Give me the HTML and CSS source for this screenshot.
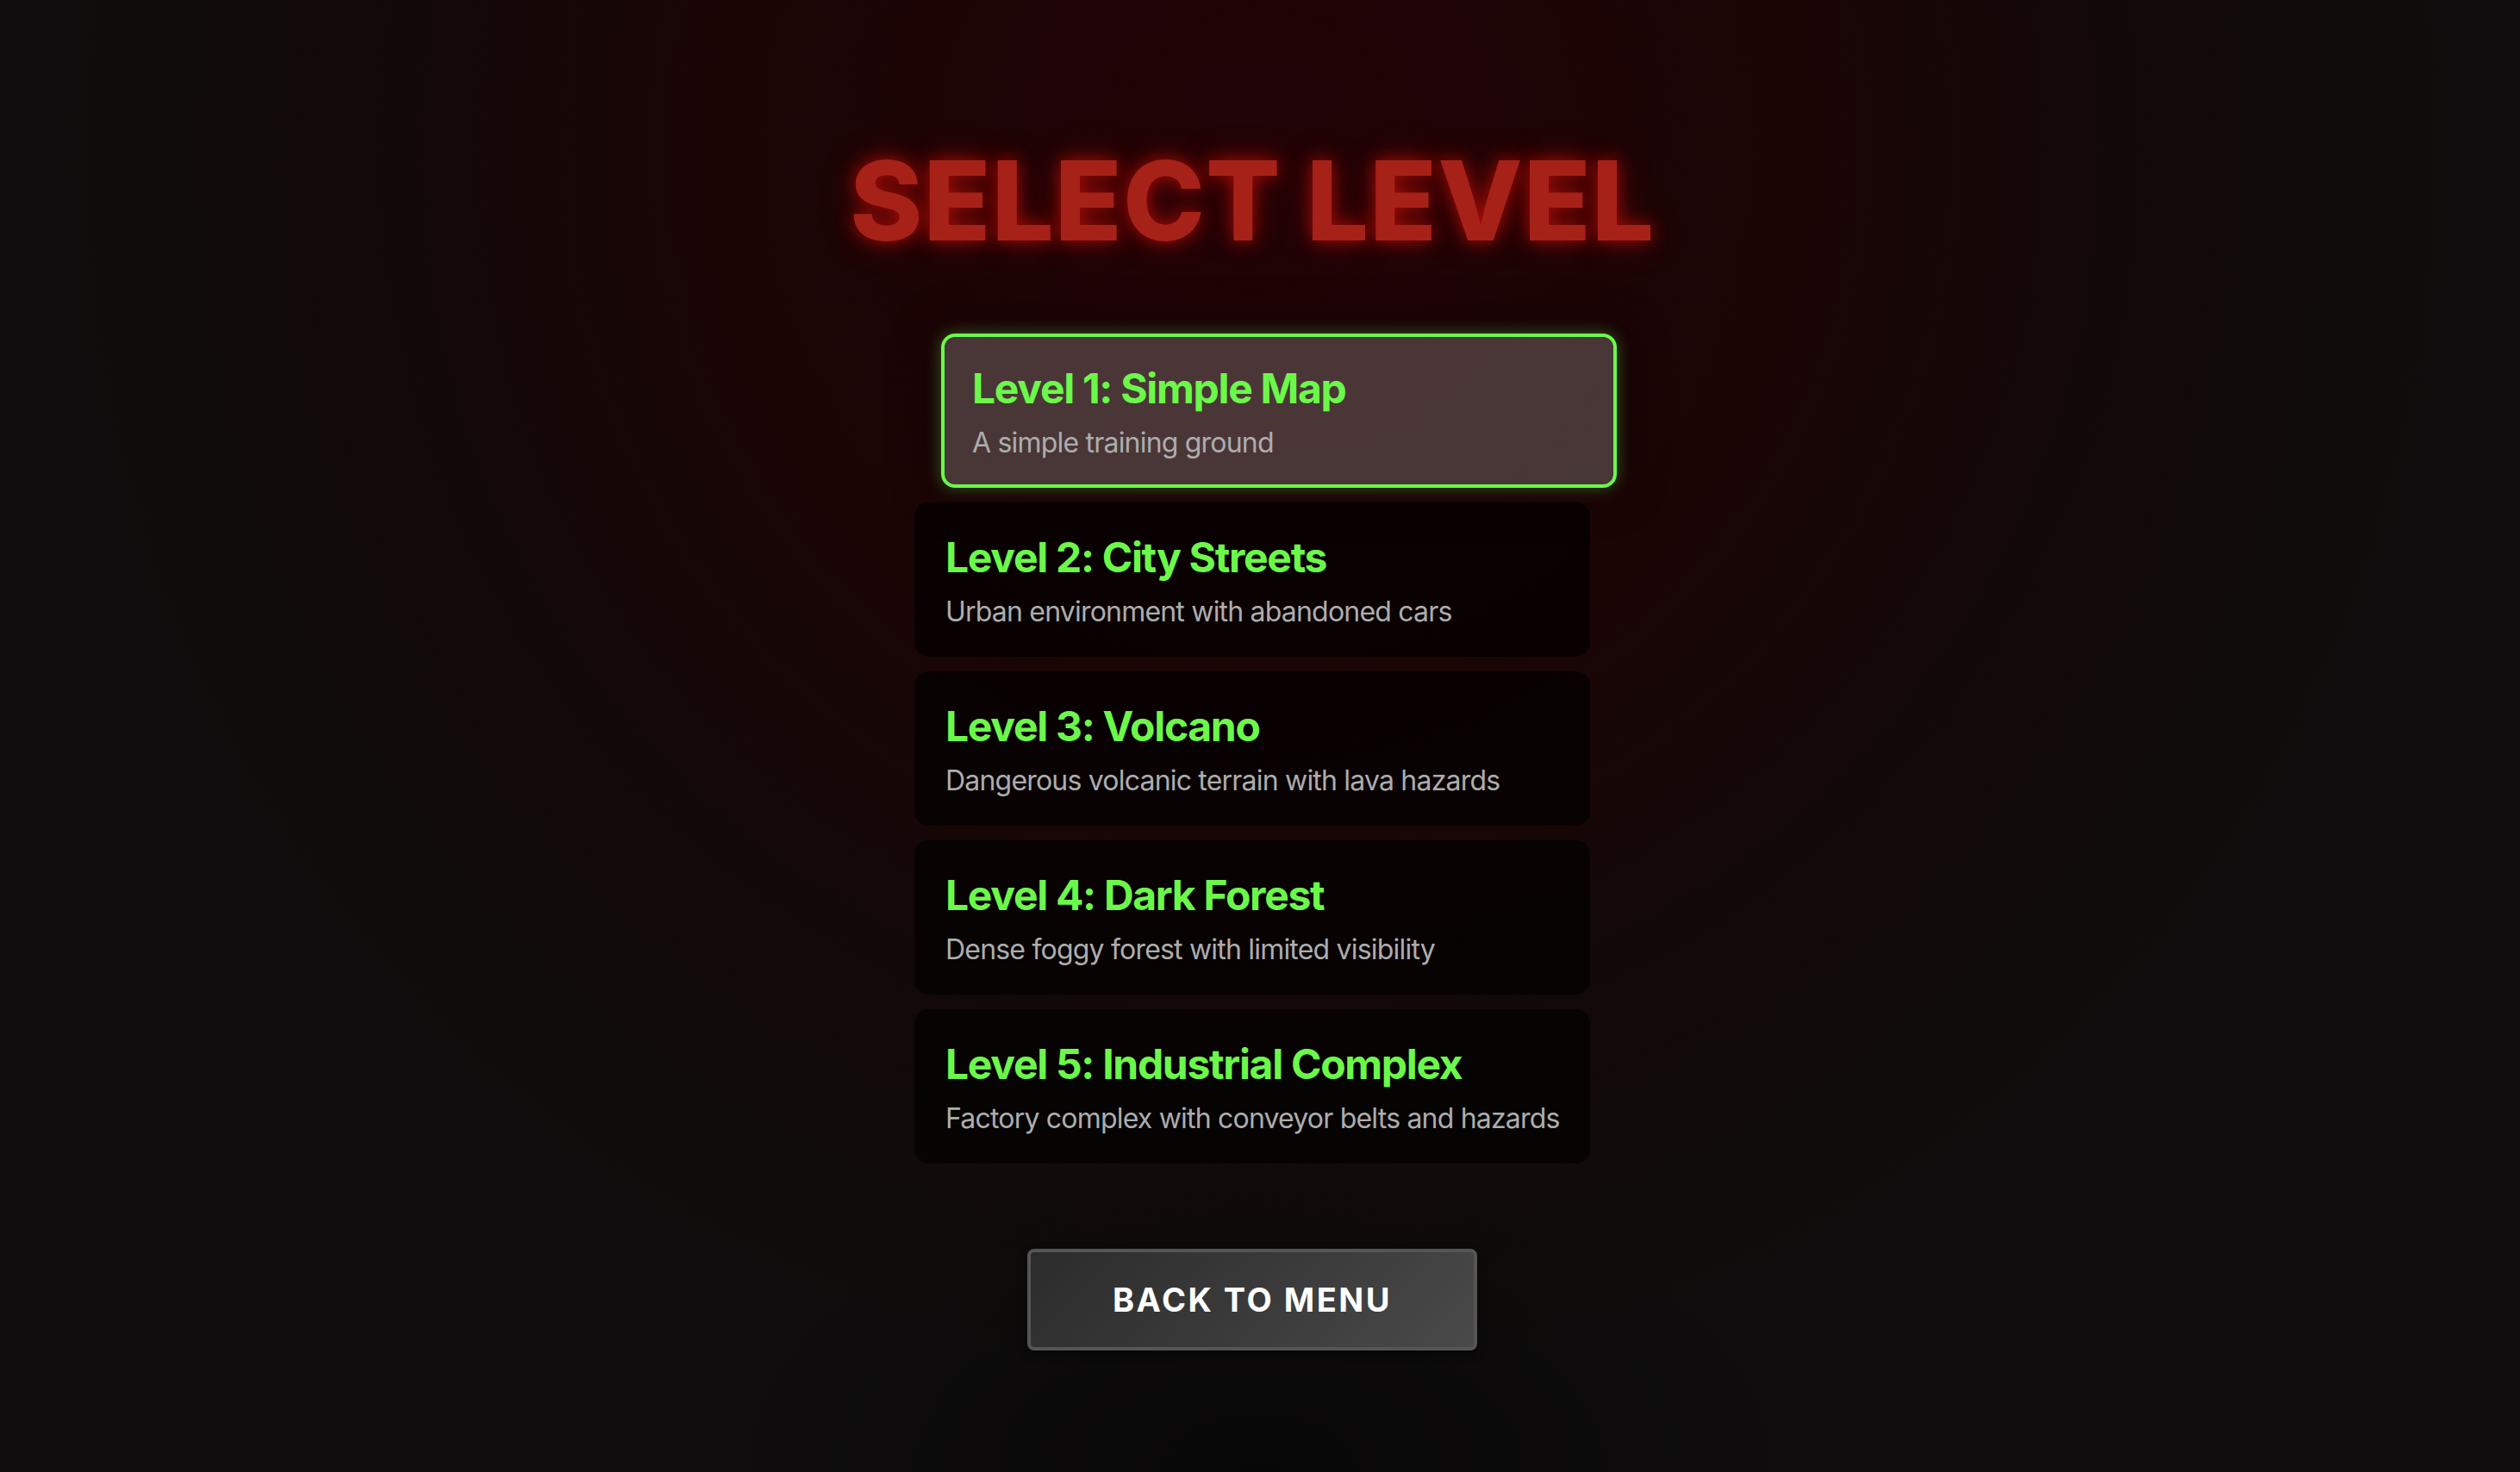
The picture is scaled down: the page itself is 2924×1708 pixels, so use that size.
FILE: index.html
```html
<!DOCTYPE html>
<html lang="en">
<head>
<meta charset="utf-8">
<title>Select Level</title>
<link rel="stylesheet" href="styles.css">
</head>
<body>
<main class="screen">
  <h1 class="title">SELECT LEVEL</h1>
  <div class="levels">
    <div class="level selected">
      <div class="level-name">Level 1: Simple Map</div>
      <div class="level-desc">A simple training ground</div>
    </div>
    <div class="level">
      <div class="level-name">Level 2: City Streets</div>
      <div class="level-desc">Urban environment with abandoned cars</div>
    </div>
    <div class="level">
      <div class="level-name">Level 3: Volcano</div>
      <div class="level-desc">Dangerous volcanic terrain with lava hazards</div>
    </div>
    <div class="level">
      <div class="level-name">Level 4: Dark Forest</div>
      <div class="level-desc">Dense foggy forest with limited visibility</div>
    </div>
    <div class="level">
      <div class="level-name">Level 5: Industrial Complex</div>
      <div class="level-desc">Factory complex with conveyor belts and hazards</div>
    </div>
  </div>
  <button class="back-btn">BACK TO MENU</button>
</main>
</body>
</html>
```

FILE: styles.css
```css
html, body {
  margin: 0;
  padding: 0;
  height: 100%;
}

body {
  font-family: Inter, "Noto Sans", "Liberation Sans", sans-serif;
  background-color: #0f0d0d;
  background-image:
    radial-gradient(ellipse 22% 22% at 50% 100%, rgba(0,0,0,0.45), rgba(0,0,0,0) 100%),
    radial-gradient(ellipse 48% 85% at 50% 10%, #200306 0%, #1a0505 45%, rgba(20,6,6,0.6) 75%, rgba(15,13,13,0) 100%);
  overflow: hidden;
}

.screen {
  display: flex;
  flex-direction: column;
  align-items: center;
  padding: 156px 18px 0 0;
  box-sizing: border-box;
  min-height: 100%;
}

.title {
  margin: 0;
  font-size: 128px;
  line-height: 154px;
  font-weight: 800;
  letter-spacing: 1px;
  color: #a62118;
  text-shadow: 0 0 20px rgba(255, 20, 10, 0.55), 0 0 40px rgba(255, 0, 0, 0.25);
}

.levels {
  display: flex;
  flex-direction: column;
  gap: 17px;
  margin-top: 77px;
  width: 784px;
}

.level {
  box-sizing: border-box;
  width: 784px;
  padding: 32px 32px 29px;
  border: 4px solid transparent;
  border-radius: 16px;
  background: rgba(0, 0, 0, 0.62);
}

.level.selected {
  background: rgba(255, 255, 255, 0.2);
  border-color: #6cf84a;
  transform: translateX(31px);
  box-shadow: 0 0 18px rgba(108, 248, 74, 0.35), 0 0 60px rgba(0, 0, 0, 0.35);
}

.level-name {
  font-size: 48px;
  line-height: 56px;
  font-weight: 700;
  letter-spacing: -1.3px;
  color: #6cf84a;
  white-space: nowrap;
}

.level-desc {
  margin-top: 16px;
  font-size: 32px;
  line-height: 38px;
  letter-spacing: -0.8px;
  color: #adadad;
  white-space: nowrap;
}

.back-btn {
  margin-top: 99px;
  box-sizing: border-box;
  width: 522px;
  height: 118px;
  padding: 0;
  border: 4px solid #555555;
  border-radius: 8px;
  background: linear-gradient(135deg, #2c2c2c 0%, #3a3a3a 50%, #4a4a4a 100%);
  color: #ffffff;
  font-family: Inter, "Noto Sans", "Liberation Sans", sans-serif;
  font-size: 38px;
  font-weight: 700;
  letter-spacing: 2.5px;
  box-shadow: 0 4px 12px rgba(0, 0, 0, 0.4);
}
```
